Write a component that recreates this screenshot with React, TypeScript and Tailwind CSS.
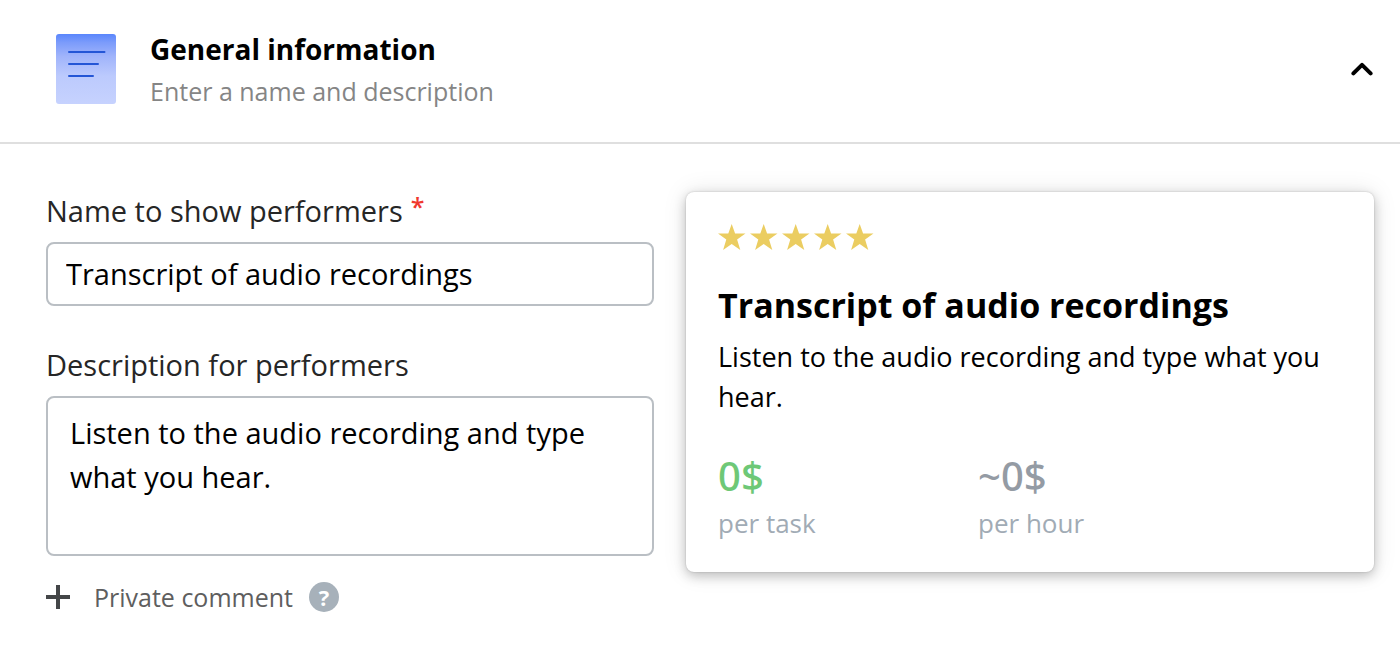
import { useState } from "react";

const title = "Transcript of audio recordings";
const summary = "Listen to the audio recording and type what you hear.";

function DocumentIcon() {
  return (
    <svg width="60" height="70" viewBox="0 0 60 70" className="mt-1.5 shrink-0" aria-hidden="true">
      <defs>
        <linearGradient id="sheet" x1="0" y1="0" x2="0" y2="1">
          <stop offset="0" stopColor="#5a86fc" />
          <stop offset="0.12" stopColor="#7b9bfb" />
          <stop offset="0.32" stopColor="#a0b4fb" />
          <stop offset="0.6" stopColor="#bccafd" />
          <stop offset="1" stopColor="#c6d2fe" />
        </linearGradient>
      </defs>
      <rect width="60" height="70" rx="3" fill="url(#sheet)" />
      <path d="M13 18H48.5M13 30H42M13 42H37" stroke="#2456d6" strokeWidth="2" strokeLinecap="round" />
    </svg>
  );
}

function Star() {
  return (
    <svg width="28" height="26" viewBox="0 0 28 26" aria-hidden="true">
      <path
        d="M13.7 0L17.1 9.4H27.5L19.1 15.6L22.3 26L13.7 20L5.1 26L8.3 15.6L0 9.4H10.3Z"
        fill="#ebcd61"
      />
    </svg>
  );
}

function Price({ amount, unit, tone }: { amount: string; unit: string; tone: string }) {
  return (
    <div>
      <div className={`font-['Noto_Sans',sans-serif] text-[40px] leading-[48px] font-medium ${tone}`}>{amount}</div>
      <div className="mt-[5px] text-[26px] leading-9 text-[#a1abb5]">{unit}</div>
    </div>
  );
}

export default function App() {
  const [name, setName] = useState(title);
  const [description, setDescription] = useState(summary);
  const [open, setOpen] = useState(true);

  return (
    <main className="min-h-screen bg-white font-['Open_Sans','Noto_Sans',sans-serif] text-black">
      <header className="flex items-start border-b-2 border-[#dfdfdf] pt-7 pr-[26px] pb-[30px] pl-14">
        <DocumentIcon />
        <div className="ml-[34px] flex-1">
          <h1 className="text-[28px] leading-[42px] font-bold">General information</h1>
          <p className="text-[25px] leading-[42px] text-[#858585]">Enter a name and description</p>
        </div>
        <button
          type="button"
          aria-label="Toggle section"
          aria-expanded={open}
          onClick={() => setOpen(!open)}
          className="cursor-pointer self-center"
        >
          <svg width="24" height="16" viewBox="0 0 24 16" fill="none" aria-hidden="true">
            <path d="M3.4 11.4L12 2.8L20.6 11.4" stroke="#000" strokeWidth="4" strokeLinecap="round" strokeLinejoin="round" />
          </svg>
        </button>
      </header>

      {open && (
        <div className="grid grid-cols-[608fr_688fr] items-start gap-8 pt-12 pr-[26px] pb-12 pl-[46px]">
          <form>
            <label htmlFor="name" className="flex text-[29px] leading-[38px] text-[#262626]">
              Name to show performers
              <span className="ml-2 text-[25px] leading-7 font-semibold text-[#f0382e]">*</span>
            </label>
            <input
              id="name"
              value={name}
              onChange={(e) => setName(e.target.value)}
              className="mt-3 block h-16 w-full rounded-lg border-2 border-[#babfc4] bg-white px-[18px] pb-0.5 text-[29px] outline-none"
            />
            <label htmlFor="description" className="mt-10 block text-[29px] leading-[38px] text-[#262626]">
              Description for performers
            </label>
            <textarea
              id="description"
              value={description}
              onChange={(e) => setDescription(e.target.value)}
              className="mt-3 block h-40 w-full resize-none rounded-lg border-2 border-[#babfc4] bg-white px-[22px] py-[13px] text-[29px] leading-[44px] outline-none"
            />
            <div className="mt-5 flex items-center gap-4">
              <button type="button" className="flex cursor-pointer items-center gap-6 text-[25px] leading-[42px] text-[#5e5e5e]">
                <svg width="24" height="24" viewBox="0 0 24 24" aria-hidden="true">
                  <path d="M12 0V24M0 12H24" stroke="#444648" strokeWidth="4" />
                </svg>
                Private comment
              </button>
              <button
                type="button"
                aria-label="Help"
                className="size-[30px] cursor-pointer rounded-full bg-[#a7b1ba] text-[22px] leading-[30px] font-bold text-white"
              >
                ?
              </button>
            </div>
          </form>

          <section className="rounded-lg bg-white px-8 pt-8 pb-[31px] shadow-[0_4px_12px_rgba(0,0,0,0.22),0_0_24px_rgba(0,0,0,0.10),0_0_2px_rgba(0,0,0,0.2)]">
            <div className="flex gap-1">
              <Star />
              <Star />
              <Star />
              <Star />
              <Star />
            </div>
            <h2 className="mt-[31px] text-[34px] leading-[48px] font-bold">{name}</h2>
            <p className="mt-2 text-[27px] leading-10">{description}</p>
            <div className="mt-[35px] grid grid-cols-[260px_1fr]">
              <Price amount="0$" unit="per task" tone="text-[#6ec877]" />
              <Price amount="~0$" unit="per hour" tone="text-[#949ba4]" />
            </div>
          </section>
        </div>
      )}
    </main>
  );
}
